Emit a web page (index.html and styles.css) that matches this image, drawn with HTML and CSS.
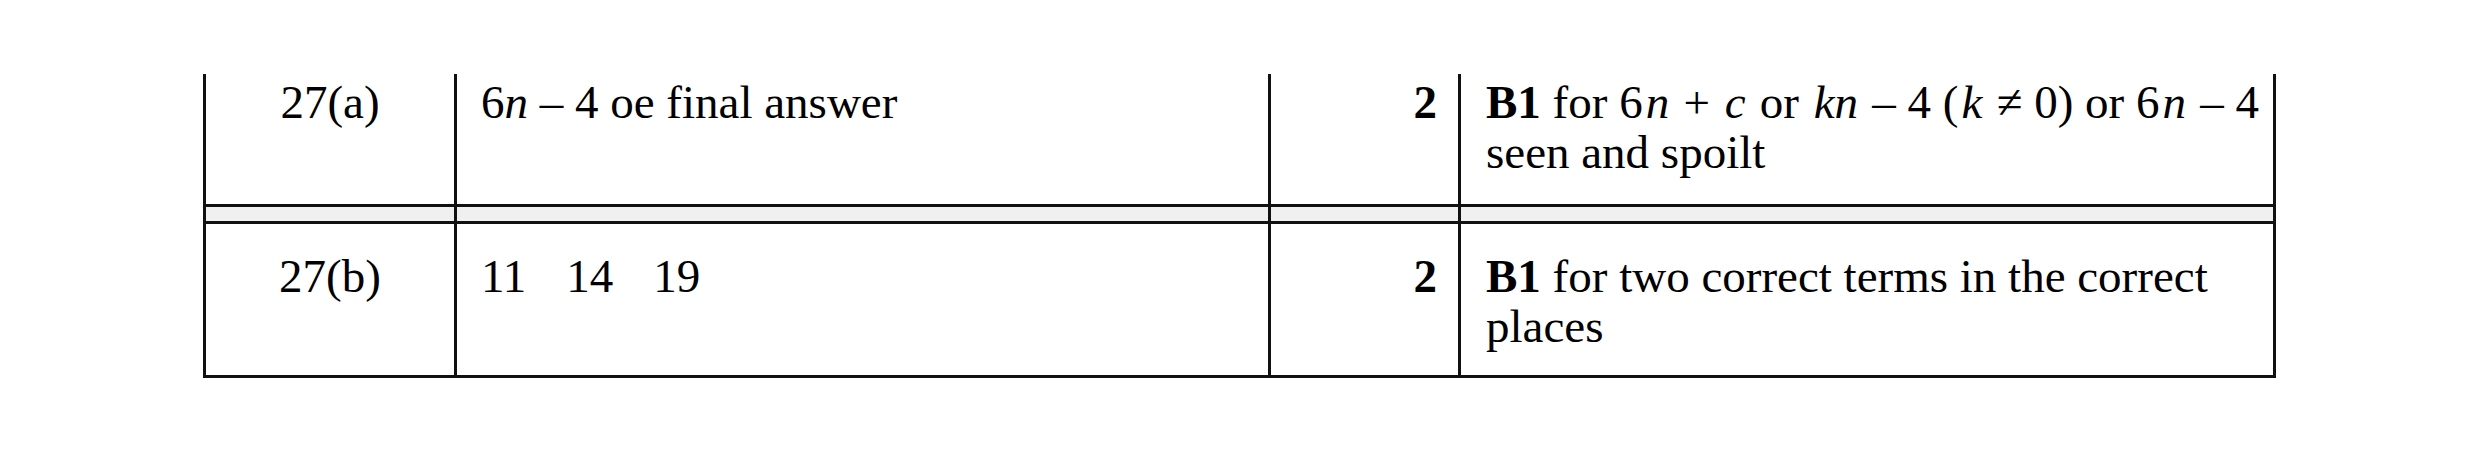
FILE: index.html
```html
<!DOCTYPE html>
<html>
<head>
<meta charset="utf-8">
<link rel="stylesheet" href="styles.css">
</head>
<body>
<div class="page">
  <table class="ms">
    <colgroup>
      <col class="c1"><col class="c2"><col class="c3"><col class="c4">
    </colgroup>
    <tbody>
      <tr class="first">
        <td class="q">27(a)</td>
        <td class="ans">6<i>n</i> – 4 oe final answer</td>
        <td class="mark">2</td>
        <td class="notes"><b>B1</b> for 6<i class="mv">n</i> + <i class="mv">c</i> or <i class="mv">kn</i> – 4 (<i class="mv">k</i> ≠ 0) or 6<i class="mv">n</i> – 4 seen and spoilt</td>
      </tr>
      <tr class="sep">
        <td><div class="gap"></div></td><td></td><td></td><td></td>
      </tr>
      <tr class="second">
        <td class="q">27(b)</td>
        <td class="ans"><span class="term">11</span><span class="term">14</span><span>19</span></td>
        <td class="mark">2</td>
        <td class="notes"><b>B1</b> for two correct terms in the correct places</td>
      </tr>
    </tbody>
  </table>
</div>
</body>
</html>
```

FILE: styles.css
```css
html, body {
  margin: 0;
  padding: 0;
  background: #ffffff;
}

.page {
  padding: 74px 0 0 203px;
}

.ms {
  border-collapse: collapse;
  table-layout: fixed;
  width: 2073px;
  font-family: "Liberation Serif", "Times New Roman", serif;
  font-size: 47px;
  line-height: 50px;
  color: #000;
}

.c1 { width: 251px; }
.c2 { width: 814px; }
.c3 { width: 190px; }
.c4 { width: 815px; }

.ms td {
  border-left: 3px solid #111;
  border-right: 3px solid #111;
  vertical-align: top;
  padding: 0;
}

.first td {
  padding-top: 3px;
  padding-bottom: 27px;
}

.second td {
  border-top: 3px solid #111;
  border-bottom: 3px solid #111;
  padding-top: 27px;
  padding-bottom: 24px;
}

.sep td {
  border-top: 3px solid #111;
  background: #f0f0f0;
  padding: 0;
}

.gap {
  height: 14px;
}

.q {
  text-align: center;
}

.ms td.ans {
  padding-left: 24px;
}

.ms td.mark {
  text-align: right;
  font-weight: bold;
  padding-right: 21px;
}

.ms td.notes {
  padding-left: 25px;
  padding-right: 12px;
}

.mv {
  padding: 0 2.5px 0 3px;
}

.term {
  margin-right: 40px;
}
```
